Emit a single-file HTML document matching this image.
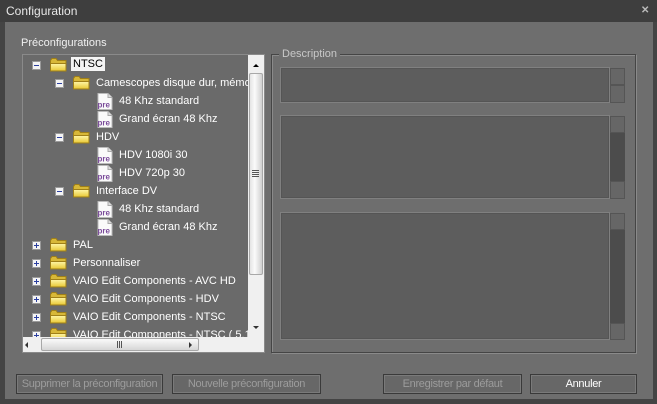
<!DOCTYPE html>
<html><head><meta charset="utf-8"><style>
*{margin:0;padding:0;box-sizing:border-box}
body{width:657px;height:404px;overflow:hidden;background:#444;font-family:"Liberation Sans",sans-serif;font-size:11px;color:#fff;position:relative}
.a{position:absolute}
.t{white-space:nowrap;line-height:14px}
.exp{position:absolute;width:9px;height:9px;background:#f4f4f4;border:1px solid #9a9a9a}
.exp::before{content:"";position:absolute;left:1px;top:3px;width:5px;height:1px;background:#2b3fa0}
.exp.p::after{content:"";position:absolute;left:3px;top:1px;width:1px;height:5px;background:#2b3fa0}
.fold{position:absolute;width:17px;height:14px}
.pre{position:absolute;width:16px;height:17px}
.btn{position:absolute;height:20px;border:1px solid #3a3a3a;background:#676767;box-shadow:inset 0 0 0 1px #7a7a7a;color:#9c9c9c;text-align:center;line-height:18px;font-size:11px;letter-spacing:-0.3px}
.box{position:absolute;background:#5d5d5d;border:1px solid #808080;box-shadow:inset 0 0 0 1px #555}
.sb{position:absolute;background:#666;border:1px solid #555}
</style></head><body>
<svg width="0" height="0" style="position:absolute"><defs>
<linearGradient id="fg" x1="0" y1="0" x2="0" y2="1"><stop offset="0" stop-color="#fff6a8"/><stop offset="1" stop-color="#e8c832"/></linearGradient>
<g id="f"><path d="M0.5 2.5 l1.5 -2 h4 l1.5 2 h8.5 v10.5 h-15.5z" fill="#d8b838" stroke="#a08018"/><path d="M0.5 5.5 h15.5 v7.5 h-15.5z" fill="url(#fg)" stroke="#a08018"/></g>
<g id="p"><path d="M1 0.5 h10 l4 4 v12 h-14z" fill="#fafafa" stroke="#bbb"/><path d="M11 0.5 v4 h4" fill="#ddd" stroke="#aaa"/><text x="0.5" y="14.5" font-size="8" font-weight="bold" fill="#7a4a9a" font-family="Liberation Sans">pre</text></g>
</defs></svg>
<div class="a" style="left:0;top:0;width:657px;height:22px;background:#3e3e3e"></div>
<div class="a t" style="left:6px;top:4px;color:#e8e8e8;font-size:12px">Configuration</div>
<div class="a" style="left:641px;top:5px;color:#bbb;font-size:10px;font-weight:bold">✕</div>
<div class="a" style="left:5px;top:22px;width:648px;height:377px;background:#6e6e6e"></div>
<div class="a t" style="left:21px;top:36px;color:#f0f0f0">Préconfigurations</div>

<div class="a" style="left:22px;top:54px;width:243px;height:299px;border:1px solid #8a8a8a;background:#6a6a6a"></div>
<div class="exp" style="left:32px;top:61px"></div><svg class="fold" style="left:50px;top:58px"><use href="#f"/></svg>
<div class="a t" style="left:71px;top:57px;background:#f4f4f4;color:#000;padding:0 2px">NTSC</div>
<div class="exp" style="left:55px;top:79px"></div><svg class="fold" style="left:73px;top:76px"><use href="#f"/></svg><div class="a t" style="left:96px;top:76px">Camescopes disque dur, mémoi</div>
<svg class="pre" style="left:97px;top:93px"><use href="#p"/></svg><div class="a t" style="left:119px;top:94px">48 Khz standard</div>
<svg class="pre" style="left:97px;top:111px"><use href="#p"/></svg><div class="a t" style="left:119px;top:112px">Grand écran 48 Khz</div>
<div class="exp" style="left:55px;top:133px"></div><svg class="fold" style="left:73px;top:130px"><use href="#f"/></svg><div class="a t" style="left:96px;top:130px">HDV</div>
<svg class="pre" style="left:97px;top:147px"><use href="#p"/></svg><div class="a t" style="left:119px;top:148px">HDV 1080i 30</div>
<svg class="pre" style="left:97px;top:165px"><use href="#p"/></svg><div class="a t" style="left:119px;top:166px">HDV 720p 30</div>
<div class="exp" style="left:55px;top:187px"></div><svg class="fold" style="left:73px;top:184px"><use href="#f"/></svg><div class="a t" style="left:96px;top:184px">Interface DV</div>
<svg class="pre" style="left:97px;top:201px"><use href="#p"/></svg><div class="a t" style="left:119px;top:202px">48 Khz standard</div>
<svg class="pre" style="left:97px;top:219px"><use href="#p"/></svg><div class="a t" style="left:119px;top:220px">Grand écran 48 Khz</div>
<div class="exp p" style="left:32px;top:241px"></div><svg class="fold" style="left:50px;top:238px"><use href="#f"/></svg><div class="a t" style="left:73px;top:238px">PAL</div>
<div class="exp p" style="left:32px;top:259px"></div><svg class="fold" style="left:50px;top:256px"><use href="#f"/></svg><div class="a t" style="left:73px;top:256px">Personnaliser</div>
<div class="exp p" style="left:32px;top:277px"></div><svg class="fold" style="left:50px;top:274px"><use href="#f"/></svg><div class="a t" style="left:73px;top:274px">VAIO Edit Components - AVC HD</div>
<div class="exp p" style="left:32px;top:295px"></div><svg class="fold" style="left:50px;top:292px"><use href="#f"/></svg><div class="a t" style="left:73px;top:292px">VAIO Edit Components - HDV</div>
<div class="exp p" style="left:32px;top:313px"></div><svg class="fold" style="left:50px;top:310px"><use href="#f"/></svg><div class="a t" style="left:73px;top:310px">VAIO Edit Components - NTSC</div>
<div class="a" style="left:23px;top:326px;width:225px;height:11px;overflow:hidden">
<div class="exp p" style="left:9px;top:5px"></div><svg class="fold" style="left:27px;top:2px"><use href="#f"/></svg><div class="a t" style="left:50px;top:2px">VAIO Edit Components - NTSC ( 5.1</div></div>

<div class="a" style="left:248px;top:55px;width:16px;height:282px;background:#f0f0f0"></div>
<div class="a" style="left:253px;top:64px;width:0;height:0;border:3px solid transparent;border-bottom:3px solid #000;border-top:0"></div>
<div class="a" style="left:249px;top:73px;width:14px;height:202px;background:linear-gradient(90deg,#e4e4e4,#fafafa 40%,#d0d0d0);border:1px solid #a8a8a8;border-radius:2px"></div>
<div class="a" style="left:252px;top:170px;width:7px;height:7px;background:repeating-linear-gradient(#555 0 1px,transparent 1px 2px)"></div>
<div class="a" style="left:253px;top:326px;width:0;height:0;border:3px solid transparent;border-top:3px solid #333;border-bottom:0"></div>
<div class="a" style="left:23px;top:337px;width:241px;height:15px;background:#f0f0f0"></div>
<div class="a" style="left:41px;top:338px;width:158px;height:13px;background:linear-gradient(#fafafa,#d6d6d6);border:1px solid #a8a8a8;border-radius:2px"></div>
<div class="a" style="left:117px;top:341px;width:6px;height:7px;background:repeating-linear-gradient(90deg,#555 0 1px,transparent 1px 2px)"></div>
<div class="a" style="left:25px;top:342px;border:3px solid transparent;border-right:3px solid #333;border-left:0"></div>
<div class="a" style="left:189px;top:342px;border:3px solid transparent;border-left:3px solid #333;border-right:0"></div>
<div class="a" style="left:248px;top:337px;width:16px;height:15px;background:#f0f0f0"></div>

<div class="a" style="left:271px;top:54px;width:365px;height:299px;border:1px solid #454545;box-shadow:1px 1px 0 #8a8a8a,inset 1px 1px 0 #8a8a8a"></div>
<div class="a t" style="left:279px;top:47px;background:#6e6e6e;color:#c8c8c8;padding:0 3px">Description</div>
<div class="box" style="left:280px;top:67px;width:330px;height:36px"></div>
<div class="sb" style="left:610px;top:68px;width:15px;height:17px"></div><div class="sb" style="left:610px;top:85px;width:15px;height:18px"></div>
<div class="box" style="left:280px;top:115px;width:330px;height:84px"></div>
<div class="sb" style="left:610px;top:116px;width:15px;height:17px"></div><div class="a" style="left:610px;top:133px;width:15px;height:48px;background:#4c4c4c"></div><div class="sb" style="left:610px;top:181px;width:15px;height:18px"></div>
<div class="box" style="left:280px;top:212px;width:330px;height:128px"></div>
<div class="sb" style="left:610px;top:213px;width:15px;height:17px"></div><div class="a" style="left:610px;top:230px;width:15px;height:93px;background:#4c4c4c"></div><div class="sb" style="left:610px;top:323px;width:15px;height:17px"></div>

<div class="btn" style="left:16px;top:374px;width:147px">Supprimer la préconfiguration</div>
<div class="btn" style="left:172px;top:374px;width:149px">Nouvelle préconfiguration</div>
<div class="btn" style="left:383px;top:374px;width:139px">Enregistrer par défaut</div>
<div class="btn" style="left:530px;top:374px;width:107px;color:#fff">Annuler</div>
</body></html>
